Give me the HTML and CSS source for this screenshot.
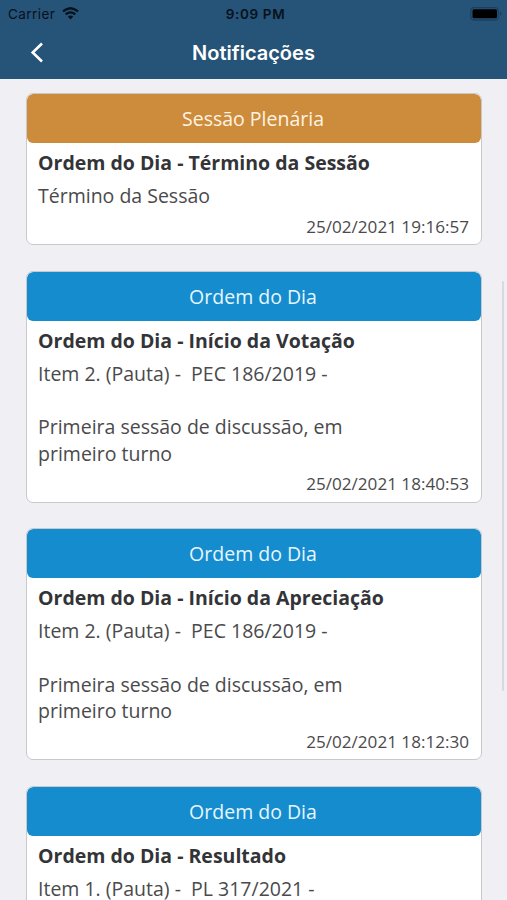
FILE: index.html
```html
<!DOCTYPE html>
<html lang="pt-BR">
<head>
<meta charset="utf-8">
<title>Notificações</title>
<link rel="stylesheet" href="styles.css">
</head>
<body>
<div class="app">
  <header class="header">
    <div class="status">
      <div class="carrier"><span>Carrier</span>
        <svg width="17" height="13" viewBox="0 0 17 13"><g fill="none" stroke="#07111b" stroke-width="2.3"><path d="M1 4.4Q8.5-2 16 4.4"/><path d="M3.7 7.4Q8.5 3.4 13.3 7.4"/></g><path fill="#07111b" d="M5.8 9.6Q8.5 7.6 11.2 9.6L8.5 12.4Z"/></svg>
      </div>
      <div class="time">9:09 PM</div>
      <div class="power"><svg width="33" height="14" viewBox="0 0 33 14"><rect x=".75" y=".5" width="27.5" height="12.5" rx="3.5" fill="none" stroke="#1b405f" stroke-width="1.3"/><rect x="2.5" y="2.3" width="24.5" height="9" rx="1.5" fill="#000"/><path d="M30 4.7q1.7.5 1.7 2t-1.7 2z" fill="#1b405f"/></svg></div>
    </div>
    <div class="nav">
      <svg class="back" width="14" height="22" viewBox="0 0 14 22"><path d="M12 1.5L2.7 10.5L12 19.5" fill="none" stroke="#fff" stroke-width="2.6"/></svg>
      <h1>Notificações</h1>
    </div>
  </header>
  <main class="list">
    <article class="card plenary">
      <h2>Sessão Plenária</h2>
      <div class="body"><h3>Ordem do Dia - Término da Sessão</h3><p>Término da Sessão</p><time>25/02/2021 19:16:57</time></div>
    </article>
    <article class="card">
      <h2>Ordem do Dia</h2>
      <div class="body"><h3>Ordem do Dia - Início da Votação</h3><p>Item 2. (Pauta) -&nbsp; PEC 186/2019 -<br><br>Primeira sessão de discussão, em<br>primeiro turno</p><time>25/02/2021 18:40:53</time></div>
    </article>
    <article class="card">
      <h2>Ordem do Dia</h2>
      <div class="body"><h3>Ordem do Dia - Início da Apreciação</h3><p>Item 2. (Pauta) -&nbsp; PEC 186/2019 -<br><br>Primeira sessão de discussão, em<br>primeiro turno</p><time>25/02/2021 18:12:30</time></div>
    </article>
    <article class="card">
      <h2>Ordem do Dia</h2>
      <div class="body"><h3>Ordem do Dia - Resultado</h3><p>Item 1. (Pauta) -&nbsp; PL 317/2021 -</p></div>
    </article>
  </main>
  <div class="scrollbar"></div>
</div>
</body>
</html>
```

FILE: styles.css
```css
* { box-sizing: border-box; margin: 0; padding: 0; }
body { background: #efeff4; font-family: "Open Sans", "Noto Sans", sans-serif; color: #4a4a4c; }
.app { position: relative; height: 900px; overflow: hidden; }
.header { height: 79px; background: #265378; }
.status { height: 27px; display: grid; grid-template-columns: 1fr auto 1fr; align-items: center; padding: 0 4px 0 8px; font: 13.5px Inter, sans-serif; color: #07111b; }
.carrier { display: flex; align-items: center; gap: 7px; letter-spacing: .45px; }
.time { font-weight: 600; letter-spacing: .65px; }
.power { display: flex; justify-content: flex-end; }
.nav { height: 52px; display: grid; grid-template-columns: 80px 1fr 80px; align-items: center; }
.back { margin-left: 30px; }
h1 { font: 600 20px/28px Inter, sans-serif; color: #fff; text-align: center; }
.list { display: flex; flex-direction: column; gap: 25.75px; padding: 13.9px 25px 0 26px; }
.card { flex: none; background: #fff; border: 1px solid #c9c9cc; border-radius: 7px; overflow: hidden; }
.card h2 { height: 49px; padding-right: 2px; line-height: 49.5px; text-align: center; font-size: 19.5px; font-weight: 400; color: #e6f6ff; background: #158ccd; border-radius: 6px; }
.card.plenary h2 { color: #fff3e2; background: #cd8c3b; }
.body { padding: 6px 12px 5px 11px; }
h3 { font-size: 19.5px; line-height: 27px; font-weight: 700; color: #333438; white-space: nowrap; }
p { margin-top: 7px; font-size: 19.5px; line-height: 26.667px; white-space: nowrap; }
time { display: block; margin-top: 5px; text-align: right; font-size: 17.1px; line-height: 24.333px; }
.scrollbar { position: absolute; right: 3px; top: 281px; width: 2px; height: 410px; border-radius: 1px; background: #d9d9de; }
```
